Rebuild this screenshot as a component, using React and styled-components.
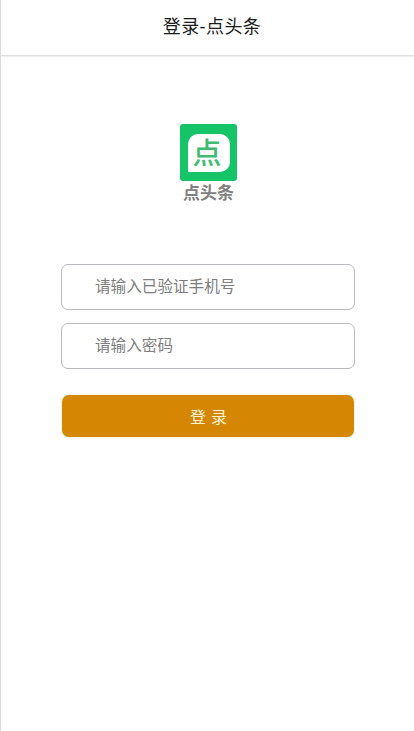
import React from "react";
import styled, { createGlobalStyle } from "styled-components";

const Global = createGlobalStyle`
  html, body { margin: 0; padding: 0; background: #fff; height: 100%; }
  body { font-family: "Liberation Sans", "Noto Sans CJK SC", sans-serif; }
  input::placeholder { color: #7d7d7d; opacity: 1; }
`;

const Page = styled.div`
  width: 414px;
  height: 731px;
  box-sizing: border-box;
  border-left: 1px solid #dcdcdc;
  overflow: hidden;
  display: flex;
  flex-direction: column;
  align-items: center;
`;

const Header = styled.header`
  width: 100%;
  height: 56px;
  box-sizing: border-box;
  border-bottom: 1px solid #e0e0e0;
  box-shadow: 0 1px 1px #f0f0f0;
  display: flex;
  align-items: center;
  justify-content: center;
  padding-left: 9px;
  padding-bottom: 5px;
  font-size: 18px;
  letter-spacing: 0.4px;
  color: #1a1a1a;
`;

const Logo = styled.div`
  margin-top: 68px;
  margin-left: 1px;
  display: flex;
  flex-direction: column;
  align-items: center;
`;

const LogoTile = styled.div`
  width: 57px;
  height: 57px;
  box-sizing: border-box;
  padding: 10px 7px 9px 8px;
  border-radius: 3px;
  background: #14c467;
`;

const LogoInner = styled.div`
  width: 42px;
  height: 38px;
  box-sizing: border-box;
  padding: 2px 3px 0 0;
  background: #fff;
  border-radius: 10px 10px 10px 1px;
  display: flex;
  align-items: center;
  justify-content: center;
  font-size: 29px;
  font-weight: 500;
  line-height: 1;
  color: #3fbb72;
`;

const LogoName = styled.div`
  margin-top: 3px;
  padding-left: 1px;
  font-size: 17px;
  line-height: 19px;
  font-weight: 700;
  color: #7f7f7f;
`;

const Form = styled.form`
  margin-top: 61px;
  margin-left: 1px;
  width: 294px;
  display: flex;
  flex-direction: column;
  gap: 13px;
`;

const Field = styled.input`
  width: 100%;
  height: 46px;
  box-sizing: border-box;
  padding: 0 0 0 33px;
  border: 1px solid #b9b9bd;
  border-radius: 7px;
  background: #fff;
  font: 15.6px "Liberation Sans", "Noto Sans CJK SC", sans-serif;
  outline: none;
`;

const Submit = styled.button`
  margin: 13px 1px 0;
  height: 42px;
  padding: 0 0 1px 6px;
  border: none;
  border-radius: 7px;
  background: #d58703;
  box-shadow: 0 0 2px #f5dc9c;
  color: #fdf3d8;
  font: 16px "Liberation Sans", "Noto Sans CJK SC", sans-serif;
  letter-spacing: 5px;
`;

export default function App() {
  return (
    <Page>
      <Global />
      <Header>登录-点头条</Header>
      <Logo>
        <LogoTile>
          <LogoInner>点</LogoInner>
        </LogoTile>
        <LogoName>点头条</LogoName>
      </Logo>
      <Form onSubmit={(e) => e.preventDefault()}>
        <Field placeholder="请输入已验证手机号" />
        <Field type="password" placeholder="请输入密码" />
        <Submit type="submit">登录</Submit>
      </Form>
    </Page>
  );
}
